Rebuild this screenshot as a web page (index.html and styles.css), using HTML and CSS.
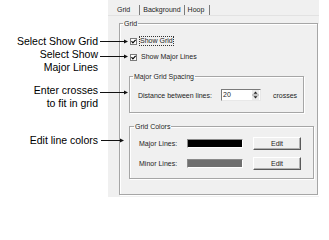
FILE: index.html
```html
<!DOCTYPE html>
<html>
<head>
<meta charset="utf-8">
<link rel="stylesheet" href="styles.css">
</head>
<body>
<div class="page">
  <div class="notes">
    <div class="note">
      <span class="note-text">Select Show Grid</span>
      <svg class="arrow" viewBox="0 0 28 5"><line x1="0" y1="2.5" x2="25" y2="2.5"/><polygon points="24,0.5 28,2.5 24,4.5"/></svg>
    </div>
    <div class="note note-multi">
      <span class="note-text">Select Show<br>Major Lines</span>
      <svg class="arrow" viewBox="0 0 28 5"><line x1="0" y1="2.5" x2="25" y2="2.5"/><polygon points="24,0.5 28,2.5 24,4.5"/></svg>
    </div>
    <div class="note note-multi note-cross">
      <span class="note-text">Enter crosses<br>to fit in grid</span>
      <svg class="arrow" viewBox="0 0 28 5"><line x1="0" y1="2.5" x2="25" y2="2.5"/><polygon points="24,0.5 28,2.5 24,4.5"/></svg>
    </div>
    <div class="note note-colors">
      <span class="note-text">Edit line colors</span>
      <svg class="arrow arrow-short" viewBox="0 0 23 5"><line x1="0" y1="2.5" x2="20" y2="2.5"/><polygon points="19,0.5 23,2.5 19,4.5"/></svg>
    </div>
  </div>

  <div class="dialog">
    <div class="tabs">
      <div class="tab tab-active">Grid</div>
      <div class="tab">Background</div>
      <div class="tab tab-last">Hoop</div>
    </div>

    <fieldset class="group group-grid">
      <legend class="legend legend-grid">Grid</legend>
      <div class="check">
        <svg class="checkbox" viewBox="0 0 7 7"><rect x="0.5" y="0.5" width="6" height="6"/><polyline points="1.5,3.2 2.9,4.8 5.6,1.8"/></svg>
        <span class="check-label focus">Show Grid</span>
      </div>
      <div class="check check-second">
        <svg class="checkbox" viewBox="0 0 7 7"><rect x="0.5" y="0.5" width="6" height="6"/><polyline points="1.5,3.2 2.9,4.8 5.6,1.8"/></svg>
        <span class="check-label">Show Major Lines</span>
      </div>

      <fieldset class="group group-spacing">
        <legend class="legend">Major Grid Spacing</legend>
        <div class="spacing-row">
          <span class="dist-label">Distance between lines:</span>
          <span class="num-input">
            <span class="num-value">20</span>
            <svg class="spinner" viewBox="0 0 7 10"><rect class="spin-bg" x="0" y="0" width="7" height="10"/><line class="spin-mid" x1="0" y1="5" x2="7" y2="5"/><polygon points="3.5,1.5 5.5,3.8 1.5,3.8"/><polygon points="1.5,6.2 5.5,6.2 3.5,8.5"/></svg>
          </span>
          <span class="unit">crosses</span>
        </div>
      </fieldset>

      <fieldset class="group group-colors">
        <legend class="legend">Grid Colors</legend>
        <div class="color-row">
          <span class="color-label">Major Lines:</span>
          <span class="swatch swatch-major"></span>
          <span class="btn">Edit</span>
        </div>
        <div class="color-row color-row-second">
          <span class="color-label">Minor Lines:</span>
          <span class="swatch swatch-minor"></span>
          <span class="btn">Edit</span>
        </div>
      </fieldset>
    </fieldset>
  </div>
</div>
</body>
</html>
```
FILE: styles.css
```css
html, body {
  margin: 0;
  padding: 0;
  background: #ffffff;
}

.page {
  display: flex;
  align-items: flex-start;
  width: 329px;
  height: 211px;
  overflow: hidden;
}

/* ---------- callout notes ---------- */
.notes {
  flex: none;
  width: 108px;
  padding-top: 35px;
  position: relative;
  z-index: 2;
  font-family: "Liberation Sans", Arial, sans-serif;
  font-size: 10.5px;
  line-height: 13px;
  color: #000;
}

.note {
  display: flex;
  justify-content: flex-end;
  align-items: center;
}

.note-text {
  text-align: right;
  white-space: nowrap;
}

.note-multi .arrow {
  align-self: flex-start;
  margin-top: 6px;
}

.note-cross {
  margin-top: 10px;
}

.note-colors {
  margin-top: 24px;
}

.arrow {
  flex: none;
  width: 28px;
  height: 5px;
  margin-left: 2px;
  margin-right: -20px;
}

.arrow line {
  stroke: #111;
  stroke-width: 1;
}

.arrow polygon {
  fill: #111;
}

.arrow-short {
  width: 23px;
  margin-left: 3px;
  margin-right: -16px;
}

/* ---------- dialog ---------- */
.dialog {
  flex: none;
  width: 211px;
  height: 197px;
  background: #f0f0f0;
  font-family: "Liberation Sans", Arial, sans-serif;
  font-size: 7px;
  color: #1c1c1c;
}

.tabs {
  display: flex;
  height: 15px;
  border-bottom: 1px solid #e2e2e2;
}

.tab {
  margin-top: 5px;
  height: 10px;
  line-height: 10px;
  padding: 0 3px;
  border-right: 1px solid #7c7c7c;
  white-space: nowrap;
}

.tab-active {
  padding: 0 9px;
}

.tab-last {
  padding-right: 5px;
}

/* ---------- group boxes ---------- */
.group {
  margin: 0;
  min-width: 0;
  border: 1px solid #a6a6a6;
  box-shadow: inset 1px 1px 0 #ffffff, 1px 1px 0 #ffffff;
}

.legend {
  padding: 0 1px;
  margin-left: -5px;
  height: 9px;
  line-height: 9px;
  font-size: 7px;
  white-space: nowrap;
}

.legend-grid {
  margin-left: -6px;
}

.group-grid {
  width: 199px;
  box-sizing: border-box;
  margin: 3px 0 0 11px;
  padding: 8px 0 15px 9px;
}

.group-spacing {
  width: 175px;
  box-sizing: border-box;
  margin-top: 10px;
  padding: 8px 0 11px 8px;
}

.group-colors {
  width: 185px;
  box-sizing: border-box;
  margin-top: 9px;
  padding: 6px 0 8px 9px;
}

/* ---------- checkboxes ---------- */
.check {
  display: flex;
  align-items: center;
  height: 10px;
  margin-left: 1px;
}

.check-second {
  margin-top: 6px;
}

.checkbox {
  flex: none;
  width: 7px;
  height: 7px;
}

.checkbox rect {
  fill: #ffffff;
  stroke: #7a7a7a;
  stroke-width: 1;
}

.checkbox polyline {
  fill: none;
  stroke: #000;
  stroke-width: 1.2;
}

.check-label {
  margin-left: 4px;
  line-height: 10px;
  white-space: nowrap;
}

.focus {
  margin-left: 2px;
  padding: 0 1px;
  outline: 1px dotted #333;
  outline-offset: -1px;
}

/* ---------- spacing row ---------- */
.spacing-row {
  display: flex;
  align-items: center;
  height: 12px;
}

.dist-label {
  width: 83px;
  flex: none;
  white-space: nowrap;
}

.num-input {
  flex: none;
  display: flex;
  align-items: center;
  box-sizing: border-box;
  width: 40px;
  height: 12px;
  background: #ffffff;
  border: 1px solid;
  border-color: #7a7a7a #e8e8e8 #e8e8e8 #7a7a7a;
}

.num-value {
  flex: 1;
  padding-left: 1px;
  line-height: 10px;
}

.spinner {
  flex: none;
  width: 7px;
  height: 10px;
  margin-right: 1px;
}

.spin-bg {
  fill: #ececec;
}

.spin-mid {
  stroke: #9a9a9a;
  stroke-width: 1;
}

.spinner polygon {
  fill: #222;
}

.unit {
  margin-left: 12px;
  white-space: nowrap;
}

/* ---------- color rows ---------- */
.color-row {
  display: flex;
  align-items: center;
  height: 13px;
}

.color-row-second {
  margin-top: 7px;
}

.color-label {
  width: 48px;
  flex: none;
  white-space: nowrap;
}

.swatch {
  flex: none;
  box-sizing: border-box;
  width: 56px;
  height: 9px;
  margin-right: 10px;
  border: 1px solid;
  border-color: #8a8a8a #ffffff #ffffff #8a8a8a;
}

.swatch-major {
  background: #000000;
}

.swatch-minor {
  background: #6f6f6f;
}

.btn {
  flex: none;
  box-sizing: border-box;
  width: 48px;
  height: 13px;
  line-height: 11px;
  text-align: center;
  background: #f0f0f0;
  border: 1px solid;
  border-color: #ffffff #5a5a5a #5a5a5a #ffffff;
  box-shadow: inset -1px -1px 0 #b0b0b0;
}
```
